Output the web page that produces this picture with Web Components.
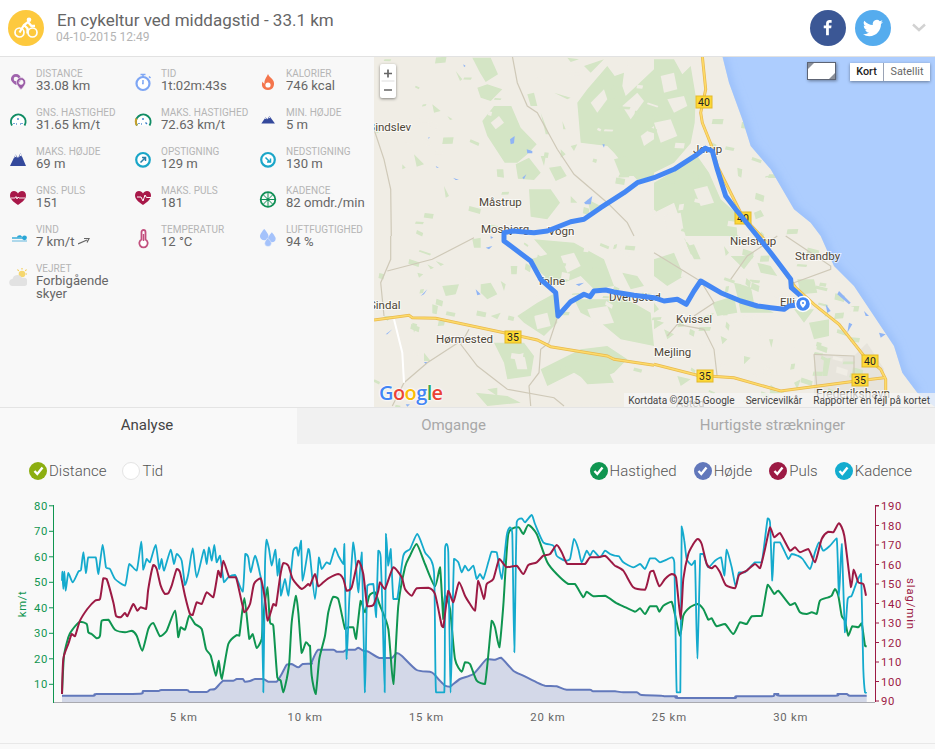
<!DOCTYPE html>
<html lang="da">
<head>
<meta charset="utf-8">
<title>En cykeltur ved middagstid</title>
<style>
  html, body { margin: 0; height: 100%; background: #f9f9f9; overflow: hidden; }
  body { font-family: Roboto, "Liberation Sans", sans-serif; }
  .middle { display: flex; height: 350px; }
</style>
</head>
<body>
<ride-header title-text="En cykeltur ved middagstid - 33.1 km" date="04-10-2015 12:49"></ride-header>
<div class="middle">
  <ride-stats>
    <ride-stat icon="pins"><span slot="label">DISTANCE</span>33.08 km</ride-stat>
    <ride-stat icon="watch"><span slot="label">TID</span>1t:02m:43s</ride-stat>
    <ride-stat icon="flame"><span slot="label">KALORIER</span>746 kcal</ride-stat>
    <ride-stat icon="gauge"><span slot="label">GNS. HASTIGHED</span>31.65 km/t</ride-stat>
    <ride-stat icon="gauge2"><span slot="label">MAKS. HASTIGHED</span>72.63 km/t</ride-stat>
    <ride-stat icon="peaklow"><span slot="label">MIN. HØJDE</span>5 m</ride-stat>
    <ride-stat icon="peak"><span slot="label">MAKS. HØJDE</span>69 m</ride-stat>
    <ride-stat icon="up"><span slot="label">OPSTIGNING</span>129 m</ride-stat>
    <ride-stat icon="down"><span slot="label">NEDSTIGNING</span>130 m</ride-stat>
    <ride-stat icon="heart"><span slot="label">GNS. PULS</span>151</ride-stat>
    <ride-stat icon="heart2"><span slot="label">MAKS. PULS</span>181</ride-stat>
    <ride-stat icon="wheel"><span slot="label">KADENCE</span>82 omdr./min</ride-stat>
    <ride-stat icon="wind"><span slot="label">VIND</span>7 km/t <svg width="12" height="8" viewBox="0 0 12 8" style="vertical-align:1px"><path d="M0 7 L9 3 M6 1.500 L11 1.500 L9 5.500" fill="none" stroke="#666" stroke-width="1.200"/></svg></ride-stat>
    <ride-stat icon="thermo"><span slot="label">TEMPERATUR</span>12 °C</ride-stat>
    <ride-stat icon="drops"><span slot="label">LUFTFUGTIGHED</span>94 %</ride-stat>
    <ride-stat icon="cloud"><span slot="label">VEJRET</span>Forbigående skyer</ride-stat>
  </ride-stats>
  <ride-map></ride-map>
</div>
<ride-tabs>
  <ride-tab active style="width:297px;padding-right:3px">Analyse</ride-tab>
  <ride-tab style="width:313px">Omgange</ride-tab>
  <ride-tab style="width:325px">Hurtigste strækninger</ride-tab>
</ride-tabs>
<ride-legend></ride-legend>
<ride-chart></ride-chart>

<script>
const ICONS = {
  pins: '<g transform="translate(1 0) scale(.92)"><path d="M6.500 1a5.500 5.500 0 0 0-5.500 5.500C1 10 6.500 13 6.500 13S12 10 12 6.500A5.500 5.500 0 0 0 6.500 1zm0 3a2.500 2.500 0 1 1 0 5 2.500 2.500 0 0 1 0-5z" fill="#a064ad"/><path d="M12 5a5 5 0 0 0-5 5c0 3.500 5 8 5 8s5-4.500 5-8a5 5 0 0 0-5-5zm0 2.700a2.400 2.400 0 1 1 0 4.800 2.400 2.400 0 0 1 0-4.800z" fill="#9a5ba6" stroke="#f8f8f8" stroke-width=".7"/></g>',
  watch: '<circle cx="9" cy="10.500" r="6.500" fill="#fff" stroke="#7ea6f4" stroke-width="2.200"/><path d="M6.500 1.500h5M9 2v2M15 3.500l1.500 1.500" stroke="#7ea6f4" stroke-width="1.500" fill="none"/><path d="M9 7v3.500h-1" stroke="#7ea6f4" stroke-width="1.500" fill="none"/>',
  flame: '<path d="M9 1c1 3 4 4 5.500 7 1.300 2.800.6 9-5.500 9S2.200 11.500 3.500 8.500C4 10 5 10.500 5.500 10.500 5 7 7.500 4.500 9 1z" fill="#f4754c"/><circle cx="9" cy="12" r="2.600" fill="#fff"/>',
  gauge: '<path d="M3 13.500A7.300 7.300 0 1 1 15.500 13.500" fill="#fff" stroke="#108c64" stroke-width="2"/><path d="M5 12v-1M9 8V6M13 12v-1M7 12h.8M11 12h.8" stroke="#3a7ec8" stroke-width="1.400"/>',
  gauge2: '<path d="M3 13.500A7.300 7.300 0 1 1 15.500 13.500" fill="#fff" stroke="#108c64" stroke-width="2"/><path d="M3 13.500A7.300 7.300 0 0 1 2.500 6.500" fill="none" stroke="#c9a02c" stroke-width="2"/><path d="M5 12v-1M9 8V6M13 12l-1.500-1.500M7 12h.8" stroke="#3a7ec8" stroke-width="1.400"/>',
  peaklow: '<g transform="translate(1.500 -1.200) scale(.85)"><path d="M1 15L6 7.500l2 2.500 2.500-4 6.500 9z" fill="#34499c"/><path d="M6 7.500l1 2.500-1.500-.7L5 10.500zM10.500 6l1 3-1-.7-1.200 1z" fill="#fff"/></g>',
  peak: '<g transform="translate(0 -3)"><path d="M1 18L6.500 6.500l2.500 3.500 2.500-5L17 18z" fill="#34499c"/><path d="M6.500 6.500l1.300 3-1.300-.7-1.300 1.400zM11.500 5l1.300 3.500-1.300-.7-1.300 1.400z" fill="#fff"/></g>',
  up: '<circle cx="9" cy="8.800" r="6.800" fill="#fff" stroke="#1aa6c8" stroke-width="2.200"/><path d="M6.500 11.500l4.500-4.500M8 6.500h3.500V10" stroke="#2b7fa8" stroke-width="1.500" fill="none"/>',
  down: '<circle cx="9" cy="8.800" r="6.800" fill="#fff" stroke="#1aa6c8" stroke-width="2.200"/><path d="M6.500 6.500l4.500 4.500M11.500 7.500V11H8" stroke="#1aa6c8" stroke-width="1.500" fill="none"/>',
  heart: '<g transform="translate(0 -2)"><path d="M9 17C4 13.500 1 11 1 7.200 1 4.500 3 3 5 3c1.800 0 3.200 1 4 2.400C9.800 4 11.200 3 13 3c2 0 4 1.500 4 4.200C17 11 14 13.500 9 17z" fill="#a81849"/><path d="M2 10h4l1-1.500 1 2.500 1-2 1 1h6" stroke="#fff" stroke-width=".9" fill="none"/></g>',
  heart2: '<g transform="translate(0 -2)"><path d="M9 17C4 13.500 1 11 1 7.200 1 4.500 3 3 5 3c1.800 0 3.200 1 4 2.400C9.800 4 11.200 3 13 3c2 0 4 1.500 4 4.200C17 11 14 13.500 9 17z" fill="#a81849"/><path d="M3 9h4l2 4 2-6 1.500 2.500H17" stroke="#fff" stroke-width="1" fill="none"/></g>',
  wheel: '<circle cx="9" cy="9.500" r="7.300" fill="none" stroke="#0f8f55" stroke-width="1.800"/><path d="M9 2.500v14M2 9.500h14M4 4.500l10 10M14 4.500l-10 10" stroke="#0f8f55" stroke-width="1"/><circle cx="9" cy="9.500" r="1.500" fill="#0f8f55"/>',
  wind: '<path d="M3 9h11" stroke="#29a6d6" stroke-width="1.400" fill="none"/><path d="M3 12h15" stroke="#8fcbe6" stroke-width="1.400"/><circle cx="15.500" cy="8.800" r="2.400" fill="#29a6d6"/><path d="M8 8.500c0-2.500 4.500-3 5-.5z" fill="#29a6d6"/>',
  thermo: '<path d="M7.500 3a2 2 0 0 1 4 0v7.500a4.200 4.200 0 1 1-4 0z" fill="#fff" stroke="#c2507e" stroke-width="1.800"/><path d="M9.500 5v7" stroke="#c2507e" stroke-width="1.500"/>',
  drops: '<g transform="translate(0 -1) scale(.95)"><path d="M5.500 1S1 6 1 8.500a4.500 4.500 0 0 0 9 0C10 6 5.500 1 5.500 1z" fill="#a4c2fb"/><path d="M13.500 4.500S9.500 9 9.500 11a4 4 0 0 0 8 0c0-2-4-6.500-4-6.500z" fill="#a4c2fb"/><path d="M9 10.500S6 14 6 16a3.500 3.500 0 0 0 7 0c0-2-4-5.500-4-5.500z" fill="#a4c2fb" stroke="#f8f8f8" stroke-width=".5"/></g>',
  cloud: '<path d="M13 0v1.500M8.500 1.500L9.700 3M17.500 1.500L16.300 3M18 6h-1.500" stroke="#f2c94c" stroke-width="1.100"/><circle cx="13" cy="6" r="3.300" fill="#f5d76e"/><path d="M4 18a3.500 3.500 0 0 1-.5-7 5 5 0 0 1 9.500-1 4 4 0 0 1 3 8z" fill="#e2e2e2"/>'
};

class RideHeader extends HTMLElement {
  constructor() {
    super();
    this.shadowDOM = this.attachShadow({ mode: "open" });
  }
  connectedCallback() {
    this.shadowDOM.innerHTML = `
      <style>
        :host { display: flex; align-items: center; height: 57px; box-sizing: border-box; background: #fff; border-bottom: 1px solid #e2e2e2; padding: 0 9px 1px 8px; }
        .badge { width: 36px; height: 36px; border-radius: 50%; background: #fdc93e; display: flex; align-items: center; justify-content: center; margin-right: 13px; flex: none; }
        .text { flex: 1; margin-top: -2px; }
        .title { font-size: 17px; line-height: 20px; color: #666; }
        .date { font-size: 12px; line-height: 14px; color: #b4b4b4; margin-left: -1px; }
        .social { width: 36px; height: 36px; border-radius: 50%; display: flex; align-items: center; justify-content: center; margin-right: 9px; }
        .fb { background: #3b5795; }
        .tw { background: #55acee; margin-right: 21px; }
        .chev { width: 14px; margin-right: 0; }
      </style>
      <div class="badge">
        <svg width="24" height="22" viewBox="0 0 24 22">
          <circle cx="5.500" cy="15.500" r="4.500" fill="none" stroke="#fff" stroke-width="1.700"/>
          <circle cx="18.500" cy="15.500" r="4.500" fill="none" stroke="#fff" stroke-width="1.700"/>
          <circle cx="15" cy="2.800" r="2.300" fill="#fff"/>
          <path d="M5.500 15.500L10 8l4-3 3.500 4h3.500M10 8l3.500 3.500v5" fill="none" stroke="#fff" stroke-width="2.300"/>
        </svg>
      </div>
      <div class="text">
        <div class="title">${this.getAttribute("title-text")}</div>
        <div class="date">${this.getAttribute("date")}</div>
      </div>
      <div class="social fb">
        <svg width="10" height="17" viewBox="0 0 12 22"><path d="M3.500 21V12H.5V8.500h3V6c0-3 1.800-4.600 4.500-4.600 1.300 0 2.400.1 2.700.1v3.200H8.800c-1.500 0-1.700.7-1.700 1.700v2.100h3.500l-.5 3.500h-3v9z" fill="#fff"/></svg>
      </div>
      <div class="social tw">
        <svg width="20" height="20" viewBox="0 0 24 24"><path d="M23.950 4.570a10 10 0 0 1-2.820.78 4.960 4.960 0 0 0 2.160-2.720c-.95.55-2 .96-3.120 1.190a4.920 4.920 0 0 0-8.380 4.480C7.690 8.100 4.070 6.130 1.640 3.160a4.930 4.930 0 0 0 1.520 6.570 4.900 4.900 0 0 1-2.230-.61v.06a4.920 4.920 0 0 0 3.950 4.830 4.990 4.990 0 0 1-2.210.08 4.940 4.940 0 0 0 4.600 3.420A9.870 9.870 0 0 1 0 19.540 13.940 13.940 0 0 0 7.550 21.750c9.060 0 14-7.500 14-14v-.64a9.940 9.940 0 0 0 2.400-2.540z" fill="#fff"/></svg>
      </div>
      <svg class="chev" width="14" height="9" viewBox="0 0 14 9"><path d="M1 1.500L7 7l6-5.500" fill="none" stroke="#d2d2d2" stroke-width="2.400"/></svg>
    `;
  }
}

class RideStats extends HTMLElement {
  constructor() {
    super();
    this.shadowDOM = this.attachShadow({ mode: "open" });
    this.shadowDOM.innerHTML = `
      <style>
        :host { display: grid; grid-template-columns: repeat(3, 125px); grid-auto-rows: 39px; align-content: start; width: 374px; box-sizing: border-box; padding: 11px 0 0 9px; background: #f8f8f8; }
      </style>
      <slot></slot>
    `;
  }
}

class RideStat extends HTMLElement {
  constructor() {
    super();
    this.shadowDOM = this.attachShadow({ mode: "open" });
  }
  connectedCallback() {
    const name = this.getAttribute("icon");
    this.shadowDOM.innerHTML = `
      <style>
        :host { display: flex; align-items: flex-start; font-size: 13.1px; line-height: 13px; color: #666; }
        svg.ic { flex: none; margin: 5px 9px 0 0; }
        .label { font-size: 10px; line-height: 11px; color: #b5b5b5; white-space: nowrap; }
        .value { padding-right: 8px; }
      </style>
      <svg class="ic" width="18" height="20" viewBox="0 0 18 20">${ICONS[name]}</svg>
      <div class="value"><div class="label"><slot name="label"></slot></div><slot></slot></div>
    `;
  }
}

// map data is traced in 3x crop coordinates, one origin per quadrant
const Q = { a: [374, 56], b: [654, 56], c: [374, 236], d: [654, 236] };
const mapPts = (q, list) => {
  const out = [];
  for (let i = 0; i < list.length; i += 2) {
    out.push((Q[q][0] + list[i] / 3).toFixed(1) + "," + (Q[q][1] + list[i + 1] / 3).toFixed(1));
  }
  return out.join(" ");
};

const FOREST = {
  a: [[295,5,350,5,372,55,335,78,318,50],[310,95,340,85,385,100,350,135,320,125],[325,195,360,150,412,150,440,215,488,265,460,295,430,320,392,320,340,240],[425,325,465,305,500,350,480,372,432,368],[368,340,388,340,390,365,370,362],[465,400,530,400,558,440,520,490,470,482],[525,335,560,330,578,360,545,375],[610,140,640,100,700,30,722,60,750,50,745,90,755,120,840,40,840,360,790,372,760,340,720,290,700,270,620,260],[460,115,480,110,490,150,470,150],[245,45,265,70,258,75],[175,145,200,165,180,170],[120,295,150,325,128,332],[590,270,610,265,600,285],[720,310,760,300,790,360,740,360],[500,170,525,235,515,235],[640,430,680,450,650,470],[210,390,225,420,215,425],[85,325,95,335,85,340],[580,5,615,10,590,18],[630,30,690,10,650,50],[540,110,590,125,580,130],[220,180,236,190,228,192],[0,225,22,225,10,232],[560,280,575,295,560,305],[590,420,610,440,590,440],[500,300,515,300,510,330],[565,195,575,220,568,220]],
  b: [[0,10,60,10,85,55,110,30,125,120,122,200,110,262,60,320,0,350],[60,345,130,300,165,350,200,430,245,470,250,540,95,540,60,440,0,470,0,380],[250,335,265,340,262,365,252,360],[300,470,320,462,330,480,305,490]],
  c: [[205,150,255,145,245,175,215,180],[320,145,350,140,370,175,340,190,320,170],[175,205,192,210,188,235,175,232],[410,90,430,90,428,115,412,115],[480,10,600,20,690,70,720,150,660,160,620,120,545,150,500,110,470,70,520,55],[430,240,490,200,545,170,550,260,510,300,450,260],[350,240,380,230,370,250],[360,320,450,320,480,360,470,420,400,430,390,380],[500,400,620,340,700,330,760,370,720,410,650,440,600,410,520,450],[600,190,760,190,830,230,840,330,740,310,680,260,620,230],[745,110,790,120,810,150,770,160],[305,470,400,480,440,500,340,510],[340,460,370,455,370,480],[150,350,170,375,150,375],[115,260,130,265,120,290],[610,410,700,400,720,440,640,445],[130,110,148,115,135,125],[160,85,180,95,170,100],[185,75,210,85,200,90],[295,10,320,5,320,35,300,35],[380,135,395,145,390,165],[30,240,55,240,40,255]],
  d: [[240,140,290,150,300,200,360,230,260,230,250,180],[310,80,350,90,370,120,320,110],[90,5,130,60,110,55],[0,250,30,260,0,280],[465,260,525,250,525,300,480,310],[430,130,480,130,490,170,440,175],[420,220,480,220,450,260],[230,60,300,60,270,100],[175,200,240,180,250,230,190,240],[345,310,358,310,352,335],[510,370,530,365,520,420,505,420],[0,200,15,220,0,230],[140,245,180,230,160,260],[0,70,60,50,90,120,40,150,0,120],[100,30,120,25,140,70,120,70],[210,30,225,50,215,60],[30,280,60,295,40,310],[200,300,220,310,205,325],[70,420,110,430,80,450],[270,360,290,365,270,385],[420,440,440,430,430,460]]
};
// small clearings cut back into the bigger forests
const CLEAR = {
  a: [[745,150,790,110,810,135,770,190],[650,140,690,100,700,130,670,170],[800,240,840,210,840,250,810,270],[350,200,375,180,390,200,365,220]],
  b: [[20,60,60,50,70,100,30,110],[0,200,50,190,70,240,20,260],[40,130,90,120,100,150,60,170],[120,400,160,390,180,440,140,450],[30,480,80,470,90,530,40,530]],
  c: [[560,60,600,50,620,90,580,110],[480,240,520,230,530,270,490,280],[640,220,700,210,720,260,660,270],[420,360,450,350,460,400,430,400]],
  d: []
};
const WATER = {
  a: [[408,250,422,240,420,262,410,265],[458,280,475,285,475,292,460,292],[445,365,457,355,450,370],[630,440,655,420,650,445,635,445],[685,265,692,265,690,275],[268,25,275,30,270,33],[237,365,255,372,245,372],[185,330,195,335,188,335],[162,245,168,243,164,248]],
  b: [],
  c: [[140,180,160,160,150,175],[35,295,55,280,40,295],[305,160,320,175,310,178],[605,145,630,140,615,150],[350,0,358,5,350,8],[335,35,355,30,345,40],[150,378,162,378,155,385],[95,505,108,505,100,512]],
  d: []
};
// shore lagoons sit over the sea layer, near the coast south of Strandby
const LAGOON = [[555,165,590,200,585,205,550,175],[585,260,595,265,580,290],[675,290,695,295,680,305],[630,225,645,240,635,240],[515,205,530,225,520,230]];
const GREY_ROADS = [
  ["a",[415,0,430,80,460,150,490,170,550,280,600,355,700,440,760,500,780,540]],
  ["a",[0,220,30,310,50,400,52,540]],
  ["c",[50,0,50,70,20,140,30,240]],
  ["c",[40,105,175,70,300,5]],
  ["c",[550,245,525,320,500,340,495,410,465,450,470,510]],
  ["c",[285,280,260,325,310,390,400,460,540,485,570,510]],
  ["c",[260,315,160,380,90,440,55,510]],
  ["d",[0,50,130,130,200,170]],
  ["d",[140,135,180,200,120,240]],
  ["d",[230,130,280,60,370,0]],
  ["d",[40,300,70,265,150,280,180,340,190,425]],
  ["d",[395,0,530,90,530,100,420,140]],
  ["d",[480,355,600,360,600,430]],
  ["d",[480,355,490,470]]
];
const YELLOW_ROADS = [
  ["b",[145,0,155,100,140,170,145,200,175,275,190,330,265,480,340,560]],
  ["d",[350,50,425,155,480,205,555,265,630,360,680,400,695,430,695,500]],
  ["c",[0,252,105,238,115,245,185,247,390,290,490,312,530,332,700,360,720,370,840,388]],
  ["d",[0,385,130,418,240,425,380,465,590,437,690,425]]
];
const ROUTE = mapPts("b", [154,277,175,285,190,340,215,420,245,460,310,540]) + " " +
  mapPts("d", [350,50,410,130,412,155,440,180,447,205]);
const ROUTE2 = mapPts("d", [447,205,405,210,390,220,350,215,310,210,260,195,200,170,140,135,120,165,97,205,70,190,30,195,0,185]) + " " +
  mapPts("c", [780,178,720,168,695,162,660,165,648,182,630,175,590,197,552,240,545,170,500,130,470,75,390,15,390,0]) + " " +
  mapPts("a", [390,530,415,525,480,530,520,525,590,497,630,490,680,455,750,410,790,380,840,365]) + " " +
  mapPts("b", [60,340,130,295,154,277]);
const COAST = mapPts("b", [205,0,225,80,265,190,290,270,350,340,420,460,470,500,500,540]) + " " +
  mapPts("d", [540,90,600,150,660,240,720,330,745,410,790,470]);
const SEA = COAST + " 935,407 935,57";
const LABELS = [
  ["Bindslev",368,131,11.500],["Måstrup",479,206,11.500],["Mosbjerg",481,233,11.500],["Vogn",548,235,11.500],
  ["Jerup",693,153,11.500],["Nielstrup",730,245,11.500],["Strandby",795,260,11.500],["Elling",780,306,11.500],
  ["Kvissel",676,323,11.500],["Mejling",654,356,11.500],["Hørmested",436,343,11.500],["Dvergsted",609,301,11.500],
  ["Tolne",537,285,11.500],["Sindal",369,309,11.500],["Frederikshavn",816,398,11.900],["Asted",676,407,11]
];
const SHIELDS = [["40",704,102],["40",743,218],["35",513,337],["35",705,376],["40",870,361],["35",860,380]];

// scatter of tiny fields so the land doesn't read as flat blobs
const fieldScatter = () => {
  let s = 7;
  const rnd = () => (s = (s * 16807) % 2147483647) / 2147483647;
  let out = "";
  for (let i = 0; i < 230; i++) {
    const x = 374 + 490 * Math.pow(rnd(), 0.7);
    const y = 57 + 350 * rnd();
    const w = 3 + rnd() * 9;
    const h = 1.500 + rnd() * 5;
    const dx = rnd() * 5 - 1;
    const fill = i % 5 < 3 ? "#d4e5c5" : "#f0ede5";
    out += `<polygon points="${x.toFixed(1)},${y.toFixed(1)} ${(x + w).toFixed(1)},${(y + dx).toFixed(1)} ${(x + w - 1).toFixed(1)},${(y + dx + h).toFixed(1)} ${(x - 1).toFixed(1)},${(y + h).toFixed(1)}" fill="${fill}"/>`;
  }
  return out;
};

class RideMap extends HTMLElement {
  constructor() {
    super();
    this.shadowDOM = this.attachShadow({ mode: "open" });
  }
  polys(data, fill) {
    return Object.keys(data).map(q => data[q].map(p => `<polygon points="${mapPts(q, p)}" fill="${fill}"/>`).join("")).join("");
  }
  connectedCallback() {
    const grey = GREY_ROADS.map(r => `<polyline points="${mapPts(r[0], r[1])}" fill="none" stroke="#cfc9b8" stroke-width="1.200"/>`).join("");
    const yellow = YELLOW_ROADS.map(r => `<polyline points="${mapPts(r[0], r[1])}" fill="none" stroke="#e9b94e" stroke-width="3"/><polyline points="${mapPts(r[0], r[1])}" fill="none" stroke="#fddb6a" stroke-width="1.600"/>`).join("");
    const labels = LABELS.map(l => `<text class="lbl" x="${l[1]}" y="${l[2]}" font-size="${l[3]}">${l[0]}</text>`).join("");
    const shields = SHIELDS.map(s => `<rect x="${s[1] - 8}" y="${s[2] - 6}" width="16" height="12" fill="#fdd835" stroke="#e2b92a"/><text class="sh" x="${s[1]}" y="${s[2] + 3.500}">${s[0]}</text>`).join("");
    this.shadowDOM.innerHTML = `
      <style>
        :host { display: block; position: relative; flex: 1; overflow: hidden; background: #f0ede5; }
        svg.map { display: block; }
        .lbl { font-family: Roboto, sans-serif; fill: #4f4636; paint-order: stroke; stroke: #fff; stroke-width: 2px; stroke-opacity: .7; }
        .sh { font-family: Roboto, sans-serif; font-size: 10.500px; fill: #222; text-anchor: middle; }
        .zoom { position: absolute; left: 6px; top: 7px; width: 16px; height: 34px; background: #fff; border-radius: 2px; box-shadow: 0 1px 3px rgba(0,0,0,.45); color: #666; }
        .zoom svg { display: block; }
        .full { position: absolute; left: 433px; top: 5px; width: 27px; height: 16px; background: #fff; border: 1.500px solid #5d6474; box-shadow: 1px 1px 3px rgba(0,0,0,.4); }
        .full::before { content: ""; position: absolute; left: 0; top: 0; border: 3px solid; border-color: #8a8f99 transparent transparent #8a8f99; }
        .full::after { content: ""; position: absolute; right: 0; bottom: 0; border: 3px solid; border-color: transparent #8a8f99 #8a8f99 transparent; }
        .type { position: absolute; left: 476px; top: 6px; display: flex; height: 18px; background: #fff; box-shadow: 0 1px 3px rgba(0,0,0,.4); font-size: 10.800px; line-height: 18px; color: #666; text-align: center; }
        .type span { width: 46px; }
        .type .on { width: 33px; color: #222; font-weight: 500; border-right: 1px solid #9aa3b5; }
        .attr { position: absolute; right: 0; bottom: 0; height: 14px; width: 311px; display: flex; gap: 11px; justify-content: flex-end; padding-right: 5px; box-sizing: border-box; background: rgba(245,245,245,.72); font-size: 10.100px; line-height: 15px; color: #444; white-space: nowrap; }
        .google { position: absolute; left: 5px; bottom: 1px; font-family: "Open Sans", Roboto, sans-serif; font-size: 20px; line-height: 26px; font-weight: 600; letter-spacing: -.6px; text-shadow: 0 0 2px #fff, 0 0 2px #fff, 0 0 3px #fff; }
      </style>
      <svg class="map" width="561" height="350" viewBox="374 57 561 350">
        <defs>
          <filter id="soft"><feGaussianBlur stdDeviation=".5"/></filter>
          <filter id="coast"><feGaussianBlur stdDeviation="4"/></filter>
          <clipPath id="seaclip"><polygon points="${SEA}"/></clipPath>
        </defs>
        <polygon points="814,354 854,356 867,343 884,369 884,395 814,395" fill="#e7e4dc"/>
        <g filter="url(#soft)">
          ${this.polys(FOREST, "#d4e5c5")}
          ${this.polys(CLEAR, "#f0ede5")}
          ${fieldScatter()}
          ${this.polys(WATER, "#8fb4f5")}
        </g>
        <polygon points="${SEA}" fill="#adcdfe"/>
        <g clip-path="url(#seaclip)"><polyline points="${COAST}" fill="none" stroke="#8fb7f8" stroke-width="5" filter="url(#coast)"/></g>
        <g filter="url(#soft)">${LAGOON.map(p => `<polygon points="${mapPts("d", p)}" fill="#8fb4f5"/>`).join("")}</g>
        ${grey}
        <polyline points="${mapPts("c", [60,250,85,350,90,440])}" fill="none" stroke="#fff" stroke-width="2"/>
        ${yellow}
        ${labels}
        ${shields}
        <polyline points="${ROUTE}" fill="none" stroke="#4487f4" stroke-width="5" stroke-linejoin="round" stroke-linecap="round"/>
        <polyline points="${ROUTE2}" fill="none" stroke="#4487f4" stroke-width="5" stroke-linejoin="round" stroke-linecap="round"/>
        <circle cx="803" cy="304" r="7.500" fill="#4487f4" stroke="#fff" stroke-width="1.500"/>
        <path d="M803 300a3 3 0 0 0-3 3c0 2 3 5 3 5s3-3 3-5a3 3 0 0 0-3-3zm0 2a1 1 0 1 1 0 2 1 1 0 0 1 0-2z" fill="#fff"/>
      </svg>
      <div class="zoom">
        <svg width="16" height="34" viewBox="0 0 16 34"><path d="M4 9.500h8M8 5.500v8M4 26h8" stroke="#666" stroke-width="1.700"/><path d="M1.500 17h13" stroke="#ddd"/></svg>
      </div>
      <div class="full"></div>
      <div class="type"><span class="on">Kort</span><span>Satellit</span></div>
      <div class="google"><span style="color:#4285f4">G</span><span style="color:#ea4335">o</span><span style="color:#fbbc05">o</span><span style="color:#4285f4">g</span><span style="color:#34a853">l</span><span style="color:#ea4335">e</span></div>
      <div class="attr"><span>Kortdata ©2015 Google</span><span>Servicevilkår</span><span>Rapporter en fejl på kortet</span></div>
    `;
  }
}

class RideTabs extends HTMLElement {
  constructor() {
    super();
    this.shadowDOM = this.attachShadow({ mode: "open" });
    this.shadowDOM.innerHTML = `
      <style>
        :host { display: flex; height: 36px; border-top: 1px solid #e4e4e4; }
      </style>
      <slot></slot>
    `;
  }
}

class RideTab extends HTMLElement {
  constructor() {
    super();
    this.shadowDOM = this.attachShadow({ mode: "open" });
    this.shadowDOM.innerHTML = `
      <style>
        :host { display: flex; align-items: center; justify-content: center; background: #f1f1f1; color: #a8a8a8; font-size: 15px; padding-bottom: 2px; box-sizing: border-box; }
        :host([active]) { background: #f9f9f9; color: #444; }
      </style>
      <slot></slot>
    `;
  }
}

class RideCheck extends HTMLElement {
  constructor() {
    super();
    this.shadowDOM = this.attachShadow({ mode: "open" });
  }
  connectedCallback() {
    const color = this.getAttribute("color");
    const off = this.hasAttribute("off");
    this.shadowDOM.innerHTML = `
      <style>
        :host { display: flex; align-items: center; font-size: 15px; font-weight: 300; color: #555; }
        .dot { width: 18px; height: 18px; border-radius: 50%; box-sizing: border-box; margin-right: 2px; display: flex; align-items: center; justify-content: center; background: ${off ? "#fff" : color}; ${off ? "border: 1px solid #e4e4e4;" : ""} }
      </style>
      <span class="dot">${off ? "" : '<svg width="11" height="10" viewBox="0 0 11 10"><path d="M1.500 5l2.800 3L9.500 1.500" fill="none" stroke="#fff" stroke-width="2.400"/></svg>'}</span>
      <slot></slot>
    `;
  }
}

class RideLegend extends HTMLElement {
  constructor() {
    super();
    this.shadowDOM = this.attachShadow({ mode: "open" });
    this.shadowDOM.innerHTML = `
      <style>
        :host { display: flex; align-items: center; height: 54px; padding: 0 23px 0 29px; }
        .group { display: flex; gap: 16px; }
        .group.right { gap: 17px; }
        .spacer { flex: 1; }
      </style>
      <div class="group">
        <ride-check color="#8cae10">Distance</ride-check>
        <ride-check off>Tid</ride-check>
      </div>
      <div class="spacer"></div>
      <div class="group right">
        <ride-check color="#0f9550">Hastighed</ride-check>
        <ride-check color="#6278bb">Højde</ride-check>
        <ride-check color="#9c1a44">Puls</ride-check>
        <ride-check color="#13accf">Kadence</ride-check>
      </div>
    `;
  }
}

// chart traces, same idea as the map: crop coordinates in three overlapping crops
const CX = [0, 310, 615];
const chartXY = (parts) => {
  const out = [];
  parts.forEach((list, n) => {
    for (let i = 0; i < list.length; i += 2) {
      out.push([CX[n] + list[i] / 3, 500 + list[i + 1] / 3]);
    }
  });
  return out;
};
const chartPts = (parts) => chartXY(parts).map(p => p[0].toFixed(1) + "," + p[1].toFixed(1)).join(" ");
const clamp = (v, a, b) => Math.min(Math.max(v, Math.min(a, b)), Math.max(a, b));
// low tension spline, keeps the spikes but rounds the joints like the original chart.
// control points stay inside each segment's y range, otherwise the flat bottoms overshoot
const chartPath = (parts) => {
  const p = chartXY(parts);
  let d = `M${p[0][0].toFixed(1)} ${p[0][1].toFixed(1)}`;
  for (let i = 0; i < p.length - 1; i++) {
    const a = p[Math.max(i - 1, 0)], b = p[i], c = p[i + 1], e = p[Math.min(i + 2, p.length - 1)];
    const y1 = clamp(b[1] + (c[1] - a[1]) / 9, b[1], c[1]);
    const y2 = clamp(c[1] - (e[1] - b[1]) / 9, b[1], c[1]);
    d += `C${(b[0] + (c[0] - a[0]) / 9).toFixed(1)} ${y1.toFixed(1)} ${(c[0] - (e[0] - b[0]) / 9).toFixed(1)} ${y2.toFixed(1)} ${c[0].toFixed(1)} ${c[1].toFixed(1)}`;
  }
  return d;
};

const CADENCE = [
  [186,245,187,218,190,270,193,218,197,275,205,222,218,250,235,218,243,212,250,160,258,222,265,175,287,175,295,225,308,138,318,205,330,210,345,240,375,260,388,195,410,215,424,128,430,212,440,180,450,190,467,138,478,210,485,180,492,215,512,152,522,195,530,165,545,185,555,258,565,225,578,148,590,235,612,152,620,195,627,145,635,185,643,138,650,190,660,170,672,250,685,235,705,228,728,278,736,165,745,175,752,220,765,170,780,225,785,270,790,580,795,200,800,122,807,150,815,200,826,152,833,230,838,180,843,290,855,240,865,290,880,155,890,145,895,170,903,125,908,245,925,150],
  [0,170,15,300,27,175,35,210,50,190,60,195,75,148,85,170,100,195,103,135,110,480,118,300,130,130,138,200,145,280,155,160,165,580,172,260,190,255,198,355,205,155,212,175,218,350,224,580,228,105,235,200,242,150,250,300,262,300,280,170,300,150,322,105,345,160,372,220,378,580,403,580,405,150,410,135,415,160,422,580,432,180,445,190,455,220,465,200,475,215,490,200,500,240,510,225,520,240,535,190,545,158,560,160,575,240,590,110,600,85,607,105,613,460,620,70,635,58,645,70,665,48,675,75,700,130,730,140,740,170,765,185,780,180,792,120,805,150,815,190,830,155,840,170,850,155,870,175,885,155,900,165],
  [0,170,12,172,25,190,55,205,75,195,90,210,105,178,120,178,135,190,155,182,170,175,178,190,185,580,196,580,200,82,208,125,215,180,230,198,240,185,247,478,256,165,265,165,280,205,300,185,318,175,328,230,335,152,350,205,362,262,372,220,390,220,420,190,440,190,458,58,465,70,472,245,478,130,495,130,520,180,530,165,548,170,563,180,585,210,600,160,612,130,625,155,645,140,665,118,672,290,680,135,690,400,698,300,710,290,725,250,738,225,745,510,750,580,755,582]
];
const PULSE = [
  [186,585,190,480,205,435,215,405,225,412,240,365,262,330,285,305,300,300,310,238,320,240,340,310,348,350,362,355,375,342,382,352,400,315,412,335,422,325,438,330,445,270,460,198,470,210,482,260,495,285,505,283,515,260,530,210,540,220,555,290,570,345,578,348,590,310,605,315,620,280,640,295,655,215,662,235,670,185,688,235,708,235,733,340,750,315,762,255,782,238,795,300,803,365,820,315,828,320,840,235,850,192,865,200,878,240,905,270,925,255],
  [0,260,15,225,25,262,40,250,55,238,85,225,100,240,110,275,125,265,145,185,160,225,172,322,190,318,205,275,210,250,225,270,250,205,275,235,285,270,305,290,320,268,355,266,375,285,395,380,400,385,415,275,430,310,447,250,465,290,480,315,495,335,505,245,522,300,530,255,550,240,568,180,590,205,620,200,640,225,655,198,680,190,700,170,720,165,740,138,755,160,772,195,800,195,825,195,840,175,865,175,885,170,905,190],
  [0,200,25,215,55,265,90,272,105,220,115,215,133,262,150,240,170,225,183,235,197,360,205,240,220,165,235,135,248,120,260,135,275,195,290,208,300,200,315,220,332,258,360,268,372,228,395,215,420,195,435,208,450,150,465,85,478,115,495,102,525,155,540,145,555,160,580,150,600,190,620,120,640,98,655,100,672,73,688,110,708,265,716,212,730,250,745,255,753,290]
];
const SPEED = [
  [186,585,192,470,205,415,215,395,240,368,260,375,265,400,275,405,290,418,300,410,305,365,325,362,345,392,375,400,395,395,410,410,427,455,445,390,460,372,480,412,500,395,525,335,535,415,542,385,555,392,568,350,585,375,605,390,618,450,632,470,648,530,656,485,665,540,685,435,710,408,718,410,733,298,748,420,758,405,770,447,785,420,790,350,802,265,810,370,820,380,832,535,842,545,850,580,860,540,868,490,875,370,888,290,895,340,905,462,918,430,928,440],
  [0,440,5,530,17,585,28,480,45,410,55,340,70,293,85,300,105,390,115,385,130,385,138,420,152,305,165,340,178,290,195,280,210,320,235,390,250,555,265,320,285,205,300,170,320,135,345,195,375,262,390,205,400,360,405,290,420,330,435,480,455,518,465,490,480,495,500,545,525,555,545,365,555,385,568,445,580,320,595,105,625,85,640,105,655,78,680,105,712,190,740,225,775,255,795,255,820,295,830,278,850,292,885,290,915,310],
  [0,310,25,322,60,338,75,328,90,345,105,322,125,322,133,338,145,320,170,308,195,410,205,350,225,325,248,315,265,330,280,362,290,358,305,382,330,375,355,405,375,370,395,375,410,352,440,350,458,257,478,285,490,275,525,318,540,312,555,340,575,345,590,340,605,345,615,305,640,295,650,290,660,270,670,290,680,350,690,365,700,410,712,382,730,385,740,373,750,440,755,442]
];
const HEIGHT = [
  [186,590,280,590,290,585,420,584,430,576,475,576,485,573,560,573,570,579,620,579,630,572,645,570,670,545,700,545,710,540,728,540,735,548,750,546,765,540,790,540,805,548,830,548,845,525,860,497,875,495,895,505,908,495,935,494],
  [5,490,25,452,70,452,80,458,100,458,110,452,135,452,145,446,160,455,175,458,208,477,245,477,260,462,275,470,320,513,365,520,385,540,405,560,420,563,450,540,490,525,530,480,555,482,573,476,610,515,640,530,680,550,705,560,740,562,770,572,840,572,850,577,905,577],
  [0,577,25,580,65,580,80,588,140,590,150,592,185,592,190,597,355,597,365,592,470,592,478,585,490,585,495,590,660,590,668,585,695,585,705,590,755,590]
];

class RideChart extends HTMLElement {
  constructor() {
    super();
    this.shadowDOM = this.attachShadow({ mode: "open" });
  }
  connectedCallback() {
    let left = "", right = "", bottom = "";
    for (let v = 10; v <= 80; v += 10) {
      const y = 685.3 - (v - 10) * 2.55;
      left += `<path d="M49 ${y.toFixed(1)}H53" stroke="#0f9550"/><text class="l" x="48" y="${(y + 4).toFixed(1)}">${v}</text>`;
    }
    for (let v = 90; v <= 190; v += 10) {
      const y = 702 - (v - 90) * 1.95;
      right += `<path d="M875 ${y.toFixed(1)}H879" stroke="#9c1a44"/><text class="r" x="881" y="${(y + 4).toFixed(1)}">${v}</text>`;
    }
    [5, 10, 15, 20, 25, 30].forEach((km, i) => {
      bottom += `<text class="b" x="${(183.700 + i * 121.400).toFixed(1)}" y="722">${km} km</text>`;
    });
    this.shadowDOM.innerHTML = `
      <style>
        :host { display: block; height: 251px; }
        svg { display: block; }
        text { font-family: Roboto, sans-serif; font-size: 11.300px; letter-spacing: .6px; }
        .l { fill: #0f9550; text-anchor: end; }
        .r { fill: #9c1a44; }
        .b { fill: #666; text-anchor: middle; letter-spacing: .8px; }
        path.s { fill: none; stroke-linejoin: round; }
      </style>
      <svg width="935" height="245" viewBox="0 499 935 245">
        <polygon points="62,703 ${chartPts(HEIGHT)} 866.7,703" fill="#d3d8e8"/>
        <path d="M54 703.500H875" stroke="#aaaab0"/>
        <path d="M53.500 506V704" stroke="#0f9550"/>
        <path d="M875.500 506V703" stroke="#9c1a44"/>
        <path d="M875 506.500h4" stroke="#9c1a44"/>
        ${left}${right}${bottom}
        <text transform="translate(25.500 605) rotate(-90)" text-anchor="middle" style="fill:#0f9550">km/t</text>
        <text transform="translate(907 605) rotate(90)" text-anchor="middle" style="fill:#9c1a44;letter-spacing:.9px">slag/min</text>
        <path class="s" d="${chartPath(HEIGHT)}" stroke="#6278bb" stroke-width="2"/>
        <path class="s" d="${chartPath(SPEED)}" stroke="#0f9550" stroke-width="2"/>
        <path class="s" d="${chartPath(CADENCE)}" stroke="#14aacd" stroke-width="1.800"/>
        <path class="s" d="${chartPath(PULSE)}" stroke="#9c1a44" stroke-width="2"/>
      </svg>
      <div style="height:1px;background:#e8e8e8"></div>
    `;
  }
}

customElements.define("ride-header", RideHeader);
customElements.define("ride-stats", RideStats);
customElements.define("ride-stat", RideStat);
customElements.define("ride-map", RideMap);
customElements.define("ride-tabs", RideTabs);
customElements.define("ride-tab", RideTab);
customElements.define("ride-check", RideCheck);
customElements.define("ride-legend", RideLegend);
customElements.define("ride-chart", RideChart);
</script>
</body>
</html>
